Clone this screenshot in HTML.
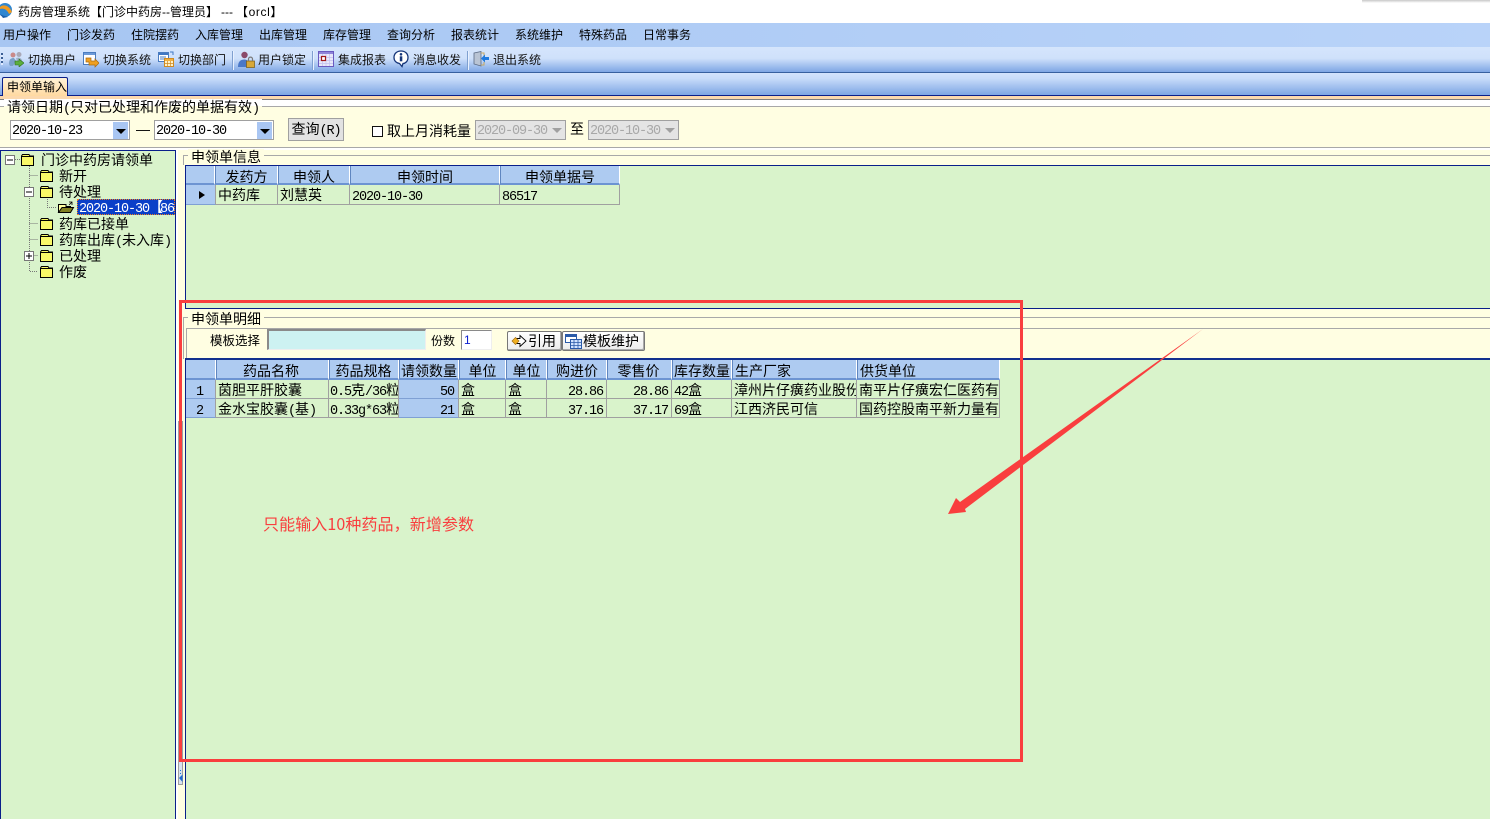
<!DOCTYPE html>
<html>
<head>
<meta charset="utf-8">
<style>
html,body{margin:0;padding:0;width:1490px;height:819px;overflow:hidden;background:#fff}
body{position:relative;font-family:"WenQuanYi Zen Hei","Liberation Sans","Noto Sans CJK SC",sans-serif;color:#000}
div,span,svg{position:absolute;box-sizing:border-box}
i{font-style:normal;font-family:"Liberation Mono",monospace;font-size:13.5px;letter-spacing:-1.1px}
.t{white-space:nowrap;line-height:16px;height:16px}
.m{font-size:12px;top:27px}
.b{font-size:12px;top:52px;color:#111}
.tr{font-size:14px;left:0}
.c{position:absolute;overflow:hidden;white-space:nowrap;font-size:14px;line-height:20px;box-sizing:border-box}
.h{background:#aecbf1;border-right:1px solid #fff;border-left:1px solid #5f86c0;border-bottom:2px solid #6d94d2;text-align:center;line-height:22px;overflow:visible}
.r{background:#d9f3cb;border-right:1px solid #a0a0a0;border-bottom:1px solid #a0a0a0;padding-left:2px}
.sel{background:#aecbf1;border-bottom:1px solid #7fa0d4;border-right:1px solid #a0a0a0}
.n{text-align:right;padding-right:3px;padding-left:0}
.sel.n{padding-right:4px}
.dd{background:#fff;border:1px solid #a0a0a0;height:20px;font-size:14px;line-height:16px;padding-left:1px}
.ar{background:#a9c6f3;width:15px;height:17px;right:1px;top:1px}
.ar:after{content:"";position:absolute;left:3px;top:7px;border-left:5px solid transparent;border-right:5px solid transparent;border-top:5px solid #000}
.dis{background:#e4e4e4;color:#a8a8a8}
.dis:after{content:"";position:absolute;right:3px;top:7px;border-left:5px solid transparent;border-right:5px solid transparent;border-top:5px solid #a0a0a0}
.sep{width:1px;height:19px;top:51px;background:#7fa0d0;box-shadow:1px 0 #e8f1ff}
.btn{background:linear-gradient(#fff,#ececec);border:1px solid #777;border-radius:2px;box-shadow:inset -1px -1px #aaa;height:20px;top:331px;font-size:14px;line-height:18px}
</style>
</head>
<body>

<!-- title bar -->
<svg style="left:0;top:3px" width="13" height="15" viewBox="0 0 13 15"><circle cx="5" cy="7" r="7" fill="#2f86d0"/><path d="M0 4C3 1 9 2 12 9L9 11C7 6 3 5 0 6Z" fill="#f09a20"/><path d="M0 11C3 13 6 13 8 14L3 15Z" fill="#1c5ea8"/></svg>
<div class="t" style="left:18px;top:4px;font-size:12px">药房管理系统【门诊中药房--管理员】</div>
<div class="t" style="left:221px;top:4px;font-size:12px">---</div>
<div class="t" style="left:236px;top:4px;font-size:12px;letter-spacing:.6px">【orcl】</div>
<div style="left:1362px;top:0;width:128px;height:3px;background:linear-gradient(#c8c8c8,#fff)"></div>

<!-- menu -->
<div style="left:0;top:23px;width:1490px;height:24px;background:linear-gradient(90deg,#a7c6f2,#b9d3f9)"></div>
<div class="t m" style="left:3px">用户操作</div>
<div class="t m" style="left:67px">门诊发药</div>
<div class="t m" style="left:131px">住院摆药</div>
<div class="t m" style="left:195px">入库管理</div>
<div class="t m" style="left:259px">出库管理</div>
<div class="t m" style="left:323px">库存管理</div>
<div class="t m" style="left:387px">查询分析</div>
<div class="t m" style="left:451px">报表统计</div>
<div class="t m" style="left:515px">系统维护</div>
<div class="t m" style="left:579px">特殊药品</div>
<div class="t m" style="left:643px">日常事务</div>

<!-- toolbar -->
<div style="left:0;top:47px;width:1490px;height:25px;background:linear-gradient(#d5e5fc 0,#cfe1fb 45%,#7ea6e4 100%)"></div>
<div style="left:0;top:72px;width:1490px;height:1px;background:#37609f"></div>
<div style="left:1px;top:53px;width:2px;height:12px;background:repeating-linear-gradient(#3b5f95 0 2px,#dfeaff 2px 4px)"></div>
<svg style="left:8px;top:51px" width="16" height="16" viewBox="0 0 16 16"><circle cx="5" cy="4" r="2.5" fill="#c98a8a"/><circle cx="11" cy="3.5" r="2.5" fill="#a9a9b8"/><path d="M1 13C1 8 3 7 6 7L8 10 5 15H2Z" fill="#7aa0c8"/><path d="M8 7C11 6 14 7 14 10H9Z" fill="#9fb2cc"/><path d="M7 10H11V8L16 12 11 16V14H7Z" fill="#5cae3c" stroke="#2f6f1f" stroke-width=".6"/></svg>
<div class="t b" style="left:28px">切换用户</div>
<svg style="left:83px;top:52px" width="16" height="16" viewBox="0 0 16 16"><rect x=".5" y=".5" width="12" height="12" fill="#fff" stroke="#4a7cc0"/><rect x="1" y="1" width="11" height="2" fill="#6c9ad8"/><path d="M3 6H8V9H12V7L16 11 12 15V13H6V10H3Z" fill="#f0a020" stroke="#a86a10" stroke-width=".7"/></svg>
<div class="t b" style="left:103px">切换系统</div>
<svg style="left:158px;top:51px" width="16" height="16" viewBox="0 0 16 16"><rect x=".5" y="1.5" width="10" height="9" fill="#fff" stroke="#4a7cc0"/><rect x="1" y="2" width="9" height="2" fill="#3f78c4"/><path d="M2 6H8M2 8H6" stroke="#4a7cc0"/><rect x="6.5" y="7.5" width="9" height="8" fill="#fff2c8" stroke="#d08a20"/><rect x="7" y="8" width="8" height="2" fill="#f0b040"/><path d="M9.5 10V15M12.5 10V15M7 12.5H15" stroke="#d08a20" stroke-width=".7"/><path d="M12 1H15V4" fill="none" stroke="#3f78c4"/></svg>
<div class="t b" style="left:178px">切换部门</div>
<div class="sep" style="left:232px"></div>
<svg style="left:238px;top:51px" width="17" height="17" viewBox="0 0 17 17"><circle cx="6.5" cy="4" r="3.2" fill="#8a4a6a"/><path d="M0 16C0 10 3 8.5 6.5 8.5C9 8.5 11 10 11 16Z" fill="#4a78c8"/><rect x="8.5" y="10" width="8" height="6.5" fill="#d8a838" stroke="#7a5a10" stroke-width=".7"/><path d="M10.5 10V8C10.5 5.5 14.5 5.5 14.5 8V10" fill="none" stroke="#7a7a7a" stroke-width="1.2"/></svg>
<div class="t b" style="left:258px">用户锁定</div>
<div class="sep" style="left:312px"></div>
<svg style="left:318px;top:51px" width="16" height="16" viewBox="0 0 16 16"><rect x=".5" y=".5" width="15" height="15" fill="#e8e8fa" stroke="#6a5ac0"/><rect x="1" y="1" width="14" height="2" fill="#8f84d8"/><path d="M1 6.5H15M1 9.5H15M1 12.5H15M4.5 3V15M8 3V15M11.5 3V15" stroke="#c4c0ee" stroke-width=".7"/><rect x="3.5" y="5.5" width="4" height="4" fill="#fff" stroke="#a01818" stroke-width="1.2"/></svg>
<div class="t b" style="left:338px">集成报表</div>
<svg style="left:393px;top:50px" width="16" height="18" viewBox="0 0 16 18"><path d="M8 1C12 1 15 3.5 15 7.5C15 11.5 12 13.5 10 13.5L9 16.5 6.5 13.5C3.5 13 1 11 1 7.5C1 3.5 4 1 8 1Z" fill="#fff" stroke="#16367a" stroke-width="1.3"/><circle cx="8" cy="4.3" r="1.3" fill="#16367a"/><rect x="6.8" y="6.3" width="2.5" height="5" fill="#16367a"/></svg>
<div class="t b" style="left:413px">消息收发</div>
<div class="sep" style="left:467px"></div>
<svg style="left:473px;top:51px" width="16" height="17" viewBox="0 0 16 17"><path d="M1 2L8 0.5V15L1 13Z" fill="#b9c4d4" stroke="#5a6a84" stroke-width=".8"/><path d="M8 2H11V5M11 11V14H8" fill="none" stroke="#c8a860"/><path d="M16 6H12V3.5L8 7.5 12 11.5V9H16Z" fill="#1e7ae0"/></svg>
<div class="t b" style="left:493px">退出系统</div>

<!-- tab bar -->
<div style="left:0;top:73px;width:1490px;height:22px;background:linear-gradient(#d3e3fc,#c8dcfa 25%,#7ea6e4)"></div>
<div style="left:0;top:95px;width:1490px;height:1px;background:#0a1f8a"></div>
<div style="left:2px;top:77px;width:66px;height:19px;background:linear-gradient(#fff3d8,#ffd9a0);border:1px solid #0a1f8a;border-bottom:0;border-radius:2px 2px 0 0"></div>
<div class="t" style="left:7px;top:79px;font-size:12px">申领单输入</div>
<div style="left:0;top:96px;width:1490px;height:3px;background:#fcd9ae"></div>
<div style="left:0;top:99px;width:1490px;height:1px;background:#808080"></div>

<!-- query panel -->
<div style="left:0;top:100px;width:1490px;height:50px;background:#fffee2"></div>
<div style="left:0;top:100px;width:1490px;height:6px;background:#fff"></div>
<div style="left:0;top:106px;width:1490px;height:1px;background:#a8a8a8"></div>
<div style="left:0;top:147px;width:1490px;height:1px;background:#a8a8a8"></div>
<div style="left:0;top:148px;width:1490px;height:2px;background:#fff"></div>
<div class="t" style="left:4px;top:99px;padding:0 3px;font-size:14px;background:linear-gradient(#fff 44%,#fffee2 44%)">请领日期<i>(</i>只对已处理和作废的单据有效<i>)</i></div>
<div class="dd" style="left:10px;top:120px;width:120px"><i>2020-10-23</i><div class="ar"></div></div>
<div class="t" style="left:136px;top:121px;font-size:14px">—</div>
<div class="dd" style="left:154px;top:120px;width:120px"><i>2020-10-30</i><div class="ar"></div></div>
<div style="left:288px;top:118px;width:56px;height:23px;background:#e2e2e2;border:1px solid #a0a0a0;font-size:14px;line-height:20px;text-align:center">查询<i>(R)</i></div>
<div style="left:372px;top:126px;width:11px;height:11px;border:1px solid #111;background:#fff"></div>
<div class="t" style="left:387px;top:123px;font-size:14px">取上月消耗量</div>
<div class="dd dis" style="left:475px;top:120px;width:91px"><i>2020-09-30</i></div>
<div class="t" style="left:570px;top:121px;font-size:14px">至</div>
<div class="dd dis" style="left:588px;top:120px;width:91px"><i>2020-10-30</i></div>

<!-- tree panel -->
<div style="left:0;top:150px;width:176px;height:669px;background:#d9f3cb;border:1px solid #0a1f8a;border-width:1px 1px 0 1px"></div>
<svg style="left:0;top:150px" width="176" height="135" viewBox="0 0 176 135">
<g fill="none" stroke="#777" stroke-dasharray="1 1">
<path d="M14.5 13V9.5H21M29.5 14V121.5H38M29.5 25.5H38M29.5 73.5H38M29.5 89.5H38M29.5 105.5H38M47.5 47V57.5H57"/>
</g>
<g fill="#fff" stroke="#777"><rect x="5.5" y="5.5" width="9" height="9"/><rect x="24.5" y="37.5" width="9" height="9"/><rect x="24.5" y="101.5" width="9" height="9"/></g>
<path d="M7 10H13M26 42H32M26 106H32M29 103V109" stroke="#000"/>
<g fill="#f8f868" stroke="#000">
<path d="M22.5 4.5H29L30 6H33.5V15.5H21.5V6Z"/>
<path d="M41.5 20.5H48L49 22H52.5V31.5H40.5V22Z"/>
<path d="M41.5 36.5H48L49 38H52.5V47.5H40.5V38Z"/>
<path d="M41.5 68.5H48L49 70H52.5V79.5H40.5V70Z"/>
<path d="M41.5 84.5H48L49 86H52.5V95.5H40.5V86Z"/>
<path d="M41.5 100.5H48L49 102H52.5V111.5H40.5V102Z"/>
<path d="M41.5 116.5H48L49 118H52.5V127.5H40.5V118Z"/>
</g>
<path d="M21.5 6.5H33.5M40.5 22.5H52.5M40.5 38.5H52.5M40.5 70.5H52.5M40.5 86.5H52.5M40.5 102.5H52.5M40.5 118.5H52.5" stroke="#000" fill="none"/>
<path d="M58.5 62.5V54.5H66V56.5H70.5V62.5Z" fill="#ffffa0" stroke="#000"/>
<path d="M58.5 62.5L62 57.5H73.5L70.5 62.5Z" fill="#808020" stroke="#000"/>
<path d="M69 52H72V55M69 55L72 52" stroke="#000" fill="none" stroke-width=".8"/>
</svg>
<div class="t tr" style="left:41px;top:152px">门诊中药房请领单</div>
<div class="t tr" style="left:59px;top:168px">新开</div>
<div class="t tr" style="left:59px;top:184px">待处理</div>
<div style="left:77px;top:199px;width:98px;height:16px;background:#0a3fc8;color:#fff;outline:1px dotted #f08020;outline-offset:-1px;overflow:hidden;font-size:14px;line-height:16px;white-space:nowrap;padding-left:2px"><i>2020-10-30</i><b style="font-weight:normal;letter-spacing:-3px">【</b><i>86517</i></div>
<div class="t tr" style="left:59px;top:216px">药库已接单</div>
<div class="t tr" style="left:59px;top:232px">药库出库<i>(</i>未入库<i>)</i></div>
<div class="t tr" style="left:59px;top:248px">已处理</div>
<div class="t tr" style="left:59px;top:264px">作废</div>

<!-- splitter -->
<div style="left:176px;top:150px;width:9px;height:669px;background:#fffee2"></div>
<div style="left:176px;top:150px;width:2px;height:669px;background:#fff"></div>
<div style="left:178px;top:421px;width:5px;height:364px;background:#d8e2f0;border:1px solid #a0a0a0"></div>
<svg style="left:178px;top:760px" width="6" height="26" viewBox="0 0 6 26"><path d="M2.5 10V11M2.5 13V14" stroke="#1e7ae0"/><path d="M1 18L4.5 14.5V22Z" fill="#1e6ad0"/></svg>

<!-- right panel -->
<div style="left:185px;top:150px;width:1305px;height:669px;background:#d9f3cb"></div>
<div style="left:178px;top:150px;width:1312px;height:15px;background:#fffee2"></div>
<div style="left:183px;top:155px;width:1307px;height:1px;background:#a8a8a8"></div>
<div style="left:183px;top:155px;width:1px;height:10px;background:#a8a8a8"></div>
<div class="t" style="left:188px;top:149px;padding:0 3px;font-size:14px;background:#fffee2">申领单信息</div>
<div style="left:185px;top:165px;width:1305px;height:1px;background:#0a1f8a"></div>
<div style="left:185px;top:165px;width:1px;height:144px;background:#0a1f8a"></div>
<div style="left:185px;top:308px;width:1305px;height:1px;background:#0a1f8a"></div>

<!-- grid 1 -->
<div class="c h" style="left:186px;top:166px;width:29px;height:19px;border-left:0"></div>
<div class="c h" style="left:215px;top:166px;width:63px;height:19px">发药方</div>
<div class="c h" style="left:278px;top:166px;width:72px;height:19px">申领人</div>
<div class="c h" style="left:350px;top:166px;width:150px;height:19px">申领时间</div>
<div class="c h" style="left:500px;top:166px;width:120px;height:19px">申领单据号</div>
<div class="c sel" style="left:186px;top:185px;width:30px;height:20px"></div>
<div style="left:199px;top:191px;width:0;height:0;border-top:4px solid transparent;border-bottom:4px solid transparent;border-left:6px solid #000"></div>
<div class="c r" style="left:216px;top:185px;width:62px;height:20px">中药库</div>
<div class="c r" style="left:278px;top:185px;width:72px;height:20px">刘慧英</div>
<div class="c r" style="left:350px;top:185px;width:150px;height:20px"><i>2020-10-30</i></div>
<div class="c r" style="left:500px;top:185px;width:120px;height:20px"><i>86517</i></div>

<!-- detail panel -->
<div style="left:178px;top:309px;width:1312px;height:50px;background:#fffee2"></div>
<div style="left:183px;top:317px;width:1307px;height:1px;background:#a8a8a8"></div>
<div style="left:183px;top:317px;width:1px;height:42px;background:#a8a8a8"></div>
<div style="left:186px;top:328px;width:1304px;height:1px;background:#a8a8a8"></div>
<div style="left:186px;top:328px;width:1px;height:30px;background:#a8a8a8"></div>
<div class="t" style="left:188px;top:311px;padding:0 3px;font-size:14px;background:#fffee2">申领单明细</div>
<div class="t" style="left:210px;top:333px;font-size:12.5px">模板选择</div>
<div style="left:267px;top:329px;width:159px;height:21px;background:#cdf2f2;border:2px solid #8a8a8a;border-right:1px solid #eee;border-bottom:1px solid #eee"></div>
<div class="t" style="left:431px;top:333px;font-size:12px">份数</div>
<div style="left:461px;top:330px;width:31px;height:20px;background:#fff;border:1px solid #8a8a8a;border-right-color:#eee;border-bottom-color:#eee;color:#0a1fd0;font-size:12px;line-height:18px;padding-left:2px">1</div>
<div class="btn" style="left:507px;width:55px;padding-left:20px">引用</div>
<svg style="left:511px;top:334px" width="16" height="14" viewBox="0 0 16 14"><path d="M5 4.5H9V1.5L15 7 9 12.5V9.5H5Z" fill="#fff" stroke="#000" stroke-width=".9"/><path d="M1 7L4.5 3.5 8 7 4.5 10.5Z" fill="#f0b020" stroke="#a06a10" stroke-width=".7"/></svg>
<div class="btn" style="left:562px;width:83px;padding-left:20px">模板维护</div>
<svg style="left:565px;top:334px" width="17" height="15" viewBox="0 0 17 15"><rect x=".5" y=".5" width="11" height="8" fill="#fff" stroke="#2a5aa8"/><rect x="1" y="1" width="10" height="2" fill="#2a5aa8"/><rect x="5.5" y="5.5" width="11" height="9" fill="#d0e4ff" stroke="#2a5aa8"/><path d="M5.5 8.5H16.5M5.5 11.5H16.5M9 6V14M13 6V14" stroke="#2a5aa8" stroke-width=".8"/></svg>
<div style="left:185px;top:358px;width:1305px;height:2px;background:#12308e"></div>
<div style="left:185px;top:359px;width:1px;height:460px;background:#0a1f8a"></div>

<!-- grid 2 -->
<div class="c h" style="left:186px;top:360px;width:30px;height:20px;border-left:0"></div>
<div class="c h" style="left:216px;top:360px;width:113px;height:20px;padding-right:3px">药品名称</div>
<div class="c h" style="left:329px;top:360px;width:70px;height:20px;padding-right:1px">药品规格</div>
<div class="c h" style="left:399px;top:360px;width:60px;height:20px">请领数量</div>
<div class="c h" style="left:459px;top:360px;width:47px;height:20px">单位</div>
<div class="c h" style="left:506px;top:360px;width:41px;height:20px">单位</div>
<div class="c h" style="left:547px;top:360px;width:60px;height:20px">购进价</div>
<div class="c h" style="left:607px;top:360px;width:65px;height:20px;padding-right:2px">零售价</div>
<div class="c h" style="left:672px;top:360px;width:60px;height:20px">库存数量</div>
<div class="c h" style="left:732px;top:360px;width:125px;height:20px;text-align:left;padding-left:2px">生产厂家</div>
<div class="c h" style="left:857px;top:360px;width:143px;height:20px;text-align:left;padding-left:2px">供货单位</div>

<div class="c sel" style="left:186px;top:380px;width:30px;height:19px;text-align:center;padding-right:2px"><i>1</i></div>
<div class="c r" style="left:216px;top:380px;width:113px;height:19px">茵胆平肝胶囊</div>
<div class="c r" style="left:329px;top:380px;width:70px;height:19px;padding-left:1px"><i>0.5</i>克<i>/36</i>粒</div>
<div class="c sel n" style="left:399px;top:380px;width:60px;height:19px"><i>50</i></div>
<div class="c r" style="left:459px;top:380px;width:47px;height:19px">盒</div>
<div class="c r" style="left:506px;top:380px;width:41px;height:19px">盒</div>
<div class="c r n" style="left:547px;top:380px;width:60px;height:19px"><i>28.86</i></div>
<div class="c r n" style="left:607px;top:380px;width:65px;height:19px"><i>28.86</i></div>
<div class="c r" style="left:672px;top:380px;width:60px;height:19px"><i>42</i>盒</div>
<div class="c r" style="left:732px;top:380px;width:125px;height:19px">漳州片仔癀药业股份</div>
<div class="c r" style="left:857px;top:380px;width:143px;height:19px">南平片仔癀宏仁医药有</div>

<div class="c sel" style="left:186px;top:399px;width:30px;height:19px;text-align:center;padding-right:2px"><i>2</i></div>
<div class="c r" style="left:216px;top:399px;width:113px;height:19px">金水宝胶囊<i>(</i>基<i>)</i></div>
<div class="c r" style="left:329px;top:399px;width:70px;height:19px;padding-left:1px"><i>0.33g*63</i>粒</div>
<div class="c sel n" style="left:399px;top:399px;width:60px;height:19px"><i>21</i></div>
<div class="c r" style="left:459px;top:399px;width:47px;height:19px">盒</div>
<div class="c r" style="left:506px;top:399px;width:41px;height:19px">盒</div>
<div class="c r n" style="left:547px;top:399px;width:60px;height:19px"><i>37.16</i></div>
<div class="c r n" style="left:607px;top:399px;width:65px;height:19px"><i>37.17</i></div>
<div class="c r" style="left:672px;top:399px;width:60px;height:19px"><i>69</i>盒</div>
<div class="c r" style="left:732px;top:399px;width:125px;height:19px">江西济民可信</div>
<div class="c r" style="left:857px;top:399px;width:143px;height:19px">国药控股南平新力量有</div>

<!-- annotations -->
<div style="left:179px;top:300px;width:844px;height:462px;border:3px solid #f93e3e"></div>
<svg style="left:0;top:0" width="1490" height="819" viewBox="0 0 1490 819"><path d="M948 514L956 498 960 502 1203 329 965 509 966 512Z" fill="#f93e3e"/></svg>
<div class="t" style="left:263px;top:515px;font-family:'Noto Sans CJK SC','Liberation Sans',sans-serif;font-size:16px;letter-spacing:.1px;color:#f93e3e">只能输入10种药品，新增参数</div>

</body>
</html>
